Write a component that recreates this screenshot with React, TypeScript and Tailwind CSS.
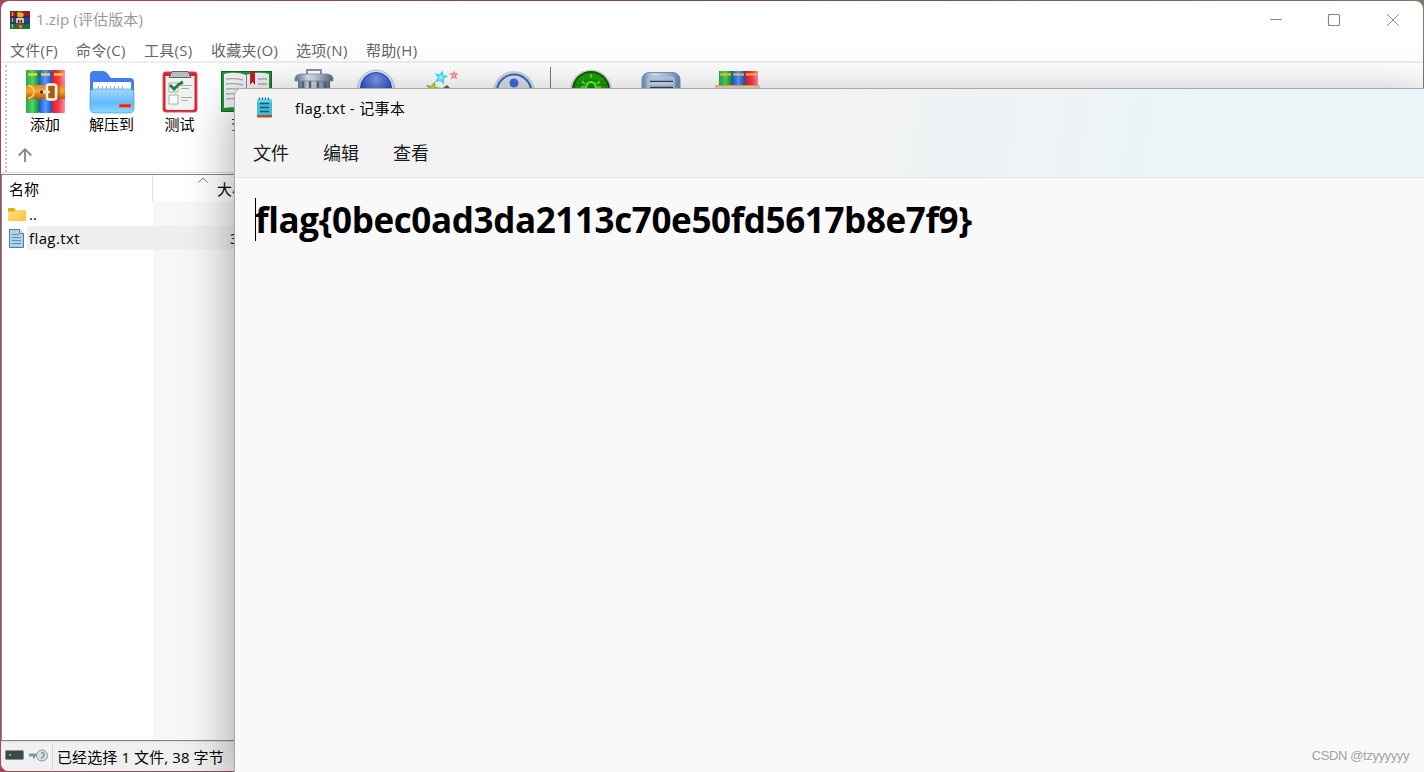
import type { ReactNode } from "react";

const menus = [
    { label: "文件(F)", width: "w-[66px]" },
    { label: "命令(C)", width: "w-[68px]" },
    { label: "工具(S)", width: "w-[67px]" },
    { label: "收藏夹(O)", width: "w-[85px]" },
    { label: "选项(N)", width: "w-[70px]" },
    { label: "帮助(H)", width: "w-[70px]" },
];

const Gradients = () => (
    <svg className="absolute" width="0" height="0">
        <defs>
            <linearGradient id="green"><stop offset="0" stopColor="#27a844" /><stop offset=".5" stopColor="#4fd468" /><stop offset="1" stopColor="#138a2c" /></linearGradient>
            <linearGradient id="blue"><stop offset="0" stopColor="#1a55d8" /><stop offset=".5" stopColor="#5a9bff" /><stop offset="1" stopColor="#1b4fc4" /></linearGradient>
            <linearGradient id="red"><stop offset="0" stopColor="#dc1d2d" /><stop offset=".5" stopColor="#f03a4a" /><stop offset="1" stopColor="#ff8fa5" /></linearGradient>
            <linearGradient id="belt" x2="0" y2="1"><stop offset="0" stopColor="#e08a1c" /><stop offset=".4" stopColor="#f5a938" /><stop offset="1" stopColor="#b85a08" /></linearGradient>
            <linearGradient id="folder" x2="0" y2="1"><stop offset="0" stopColor="#a3d6fa" /><stop offset=".6" stopColor="#62bbfb" /><stop offset="1" stopColor="#8ed8fd" /></linearGradient>
            <linearGradient id="steel"><stop offset="0" stopColor="#5f7690" /><stop offset=".35" stopColor="#dfe8f0" /><stop offset=".6" stopColor="#b4c3d2" /><stop offset="1" stopColor="#51677f" /></linearGradient>
            <linearGradient id="disk"><stop offset="0" stopColor="#6d8cba" /><stop offset=".3" stopColor="#d5e2f3" /><stop offset=".65" stopColor="#a8c0df" /><stop offset="1" stopColor="#6585b5" /></linearGradient>
            <linearGradient id="yellow" x2="1" y2="1"><stop offset="0" stopColor="#ffe596" /><stop offset="1" stopColor="#fbc434" /></linearGradient>
            <radialGradient id="ball" cx=".5" cy=".25" r=".6"><stop offset="0" stopColor="#7d9df0" /><stop offset="1" stopColor="#1e44b4" /></radialGradient>
        </defs>
    </svg>
);

const AddIcon = () => (
    <svg width="48" height="46">
        <rect x="5" y="1" width="13" height="43" rx="1" fill="url(#green)" />
        <rect x="18" y="1" width="13" height="43" rx="1" fill="url(#blue)" />
        <rect x="31" y="1" width="13" height="43" rx="1" fill="url(#red)" />
        <path d="M7 5.500h9M20 5.500h9M33 5.500h9" stroke="#ffd22b" strokeWidth="2.500" />
        <path d="M6 16h38v14H6q-1 0-1-7t1-7z" fill="url(#belt)" />
        <path d="M38 16v14" stroke="#97500d" />
        <path d="M7 16.500q6 1 6 6.500t-6 6.500" fill="none" stroke="#ffd768" strokeWidth="1.500" />
        <rect x="26" y="15.500" width="9" height="15" rx="2" fill="#a65e16" stroke="#fff3df" strokeWidth="2.500" />
        <path d="M22 23h7" stroke="#e8e0d5" strokeWidth="2.500" />
        <circle cx="20.500" cy="23" r="1.500" fill="#442000" />
    </svg>
);

const ExtractIcon = () => (
    <svg width="48" height="46">
        <path d="M2 6q0-4 4-4h9q3 0 5 3l3 4h19q4 0 4 4v26H2z" fill="#4080ee" />
        <path d="M5 13h38v14H5z" fill="#fff" />
        <path d="M10 18.500h28" stroke="#8faed0" strokeWidth="3" strokeDasharray="1 3" />
        <path d="M2 24q0-4 4-4h36q4 0 4 4v15q0 5-5 5H7q-5 0-5-5z" fill="url(#folder)" stroke="#439ee4" strokeWidth=".7" />
        <rect x="31" y="35" width="12" height="3.500" fill="#e2281a" stroke="#f98977" strokeWidth=".6" />
    </svg>
);

const TestIcon = () => (
    <svg width="48" height="46">
        <rect x="7" y="3" width="34" height="40" rx="2.500" fill="#d52334" stroke="#e2525b" />
        <path d="M9.500 7h29v32q0 2-2 2h-25q-2 0-2-2z" fill="#f1f2f2" />
        <path d="M16 2.500h16l3 6H13z" fill="#b8bebf" stroke="#6a6265" />
        <path d="M13 14h9v9h-9zM13 26h9v9h-9z" fill="#fff" stroke="#aaa" />
        <path d="M25 16.500h11M25 19.500h8M25 28.500h11M25 31.500h7" stroke="#b2a9a9" />
        <path d="M14 16l4 4q4-5 9-7" fill="none" stroke="#1b8240" strokeWidth="3" />
    </svg>
);

const ViewIcon = () => (
    <svg width="52" height="46">
        <rect x=".5" y="2.500" width="50" height="40" fill="#22933b" stroke="#0b6d25" />
        <path d="M3 5q12-3 22 1 12-4 23-1v34q-12-2-22 2-11-4-23-2z" fill="#f1f2f3" />
        <path d="M25.500 6v35" stroke="#888" />
        <path d="M5 10q9-1 17 1M5 15q9-1 17 1M5 20q9-1 17 1M5 25q9-1 17 1M5 30q9-1 17 1M37 10h9M37 15h9M29 20h17" fill="none" stroke="#a9adb0" strokeWidth="1.300" />
        <path d="M29 3h5v13l-2.500-3-2.500 3z" fill="#c91c27" />
    </svg>
);

const DeleteIcon = () => (
    <svg width="48" height="46">
        <path d="M17 5V1h14v4" fill="none" stroke="#8595a5" strokeWidth="2" />
        <path d="M8 10h32v34H8z" fill="url(#steel)" />
        <path d="M13 11v30M20 11v30M28 11v30M35 11v30" stroke="#5a6a7d" strokeWidth="2.500" />
        <path d="M5 9q1-4 7-4h24q6 0 7 4v3H5z" fill="url(#steel)" stroke="#7e8ea1" strokeWidth=".8" />
    </svg>
);

const FindIcon = () => (
    <svg width="48" height="46">
        <circle cx="24" cy="19.500" r="18.500" fill="#dfe5ec" stroke="#bcc5d0" />
        <circle cx="24" cy="19" r="15.500" fill="url(#ball)" stroke="#274ab4" />
    </svg>
);

const star = "M0-6 1.700-2 6-2 2.700 1 4 6 0 3.200-4 6-2.700 1-6-2-1.700-2z";

const WizardIcon = () => (
    <svg width="48" height="46">
        <path d={star} transform="translate(22 8) rotate(12) scale(.85)" fill="#a7f8ff" stroke="#2ae1f4" strokeWidth="1.500" />
        <path d={star} transform="translate(35 6) scale(.55)" fill="#ffc2c2" stroke="#fa8b8b" strokeWidth="2" />
        <path d={star} transform="translate(14 20) rotate(12)" fill="#c6f85a" stroke="#84d626" strokeWidth="1.500" />
        <path d="M24 19l4-3 4 4-3 3z" fill="#666" />
    </svg>
);

const InfoIcon = () => (
    <svg width="48" height="46">
        <circle cx="25" cy="23" r="21" fill="#ced5dd" />
        <circle cx="25" cy="22.500" r="17" fill="#d9dfe9" stroke="#3569cc" strokeWidth="2" />
        <circle cx="25" cy="14" r="4.500" fill="#3a70d9" />
        <path d="M19 20h9v15h-9z" fill="#3765b5" />
    </svg>
);

const VirusIcon = () => (
    <svg width="48" height="46">
        <circle cx="24" cy="21.500" r="21" fill="#d0d8d3" />
        <circle cx="24" cy="21" r="18" fill="#219c0c" stroke="#115b0a" strokeWidth="2" />
        <path d="M10 12h28M7 16h34M24 3v34" stroke="#0d7209" opacity=".7" />
        <ellipse cx="24" cy="19" rx="5" ry="6" fill="#168a08" stroke="#5eff24" strokeWidth="2" />
        <path d="M24 5v4M18 15l-3-3M30 15l3-3M18 18h-4M30 18h4" stroke="#62f52b" strokeWidth="1.500" />
    </svg>
);

const CommentIcon = () => (
    <svg width="48" height="46">
        <rect x="5" y="3.500" width="38" height="38" rx="7" fill="url(#disk)" stroke="#7595c4" />
        <rect x="10" y="7" width="28" height="25" rx="4" fill="#b8cde7" opacity=".8" />
        <path d="M13 12.500h23M13 18.500h23" stroke="#34465c" strokeWidth="1.500" />
        <path d="M13 14h23M13 20h23" stroke="#eef5fc" />
    </svg>
);

const SfxIcon = () => (
    <svg width="48" height="46">
        <rect x="5" y="2" width="13" height="15" fill="url(#green)" />
        <rect x="18" y="2" width="13" height="15" fill="url(#blue)" />
        <rect x="31" y="2" width="13" height="15" fill="url(#red)" />
        <path d="M6 5.500h11M19 5.500h11M32 5.500h11" stroke="#ffc82c" strokeWidth="2" />
        <path d="M2 16.500h43v25H2z" fill="#f5d7a6" stroke="#d8ac6e" />
    </svg>
);

const RarLogo = () => (
    <svg width="20" height="18">
        <path d="M0 0h20v6H0z" fill="#97172b" />
        <path d="M0 6h20v6H0z" fill="#283e9b" />
        <path d="M0 12h20v6H0z" fill="#147044" />
        <path d="M0 6h20M0 12h20" stroke="#222" strokeWidth=".8" />
        <path d="M2.500 1v4M2.500 7v4M2.500 13v4" stroke="#e5ad2c" strokeWidth="1.300" />
        <path d="M7 0h6v18H7z" fill="#824820" />
        <path d="M7 2l3-1 4 2-1 3H8z" fill="#e9b51e" />
        <path d="M7 12V8h6v4" fill="#4d2b1a" stroke="#f3eee6" strokeWidth="1.500" />
        <path d="M10 7v5" stroke="#eee" />
        <path d="M9 14h3v3H9z" fill="#bc922b" />
    </svg>
);

const NotepadLogo = () => (
    <svg width="17" height="21">
        <path d="M1 18h15v1.500q0 1-1 1H2q-1 0-1-1z" fill="#b45318" />
        <path d="M1 2h15v16H1z" fill="#45bad8" />
        <path d="M1 2h15v3H1z" fill="#6bd3e9" />
        <path d="M3.500.500v2M6.500.500v2M9.500.500v2M12.500.500v2" stroke="#155f78" strokeWidth="1.300" />
        <path d="M4 6.500h9M4 10.500h9M4 14.500h9" stroke="#086176" strokeWidth="1.300" />
    </svg>
);

const tools: { icon: ReactNode; label?: string; width: string }[] = [
    { icon: <AddIcon />, label: "添加", width: "w-[66px]" },
    { icon: <ExtractIcon />, label: "解压到", width: "w-[67px]" },
    { icon: <TestIcon />, label: "测试", width: "w-[69px]" },
    { icon: <ViewIcon />, label: "查看", width: "w-[65px]" },
    { icon: <DeleteIcon />, width: "w-[69px]" },
    { icon: <FindIcon />, width: "w-[56px]" },
    { icon: <WizardIcon />, width: "w-[78px]" },
    { icon: <InfoIcon />, width: "w-[62px]" },
];

const extraTools: { icon: ReactNode; label?: string; width: string }[] = [
    { icon: <VirusIcon />, width: "w-[68px]" },
    { icon: <CommentIcon />, width: "w-[71px]" },
    { icon: <SfxIcon />, width: "w-[83px]" },
];

const ToolButton = ({ icon, label, width }: { icon: ReactNode; label?: string; width: string }) => (
    <div className={`flex shrink-0 flex-col items-center ${width}`}>
        {icon}
        <span className="-mt-px text-[15px] leading-[20px] text-black">{label}</span>
    </div>
);

const WinRar = () => (
    <div className="absolute left-px top-px flex h-[770px] w-[1422px] flex-col overflow-hidden rounded-lg bg-white">
        <div className="flex h-[37px] shrink-0 items-center pl-[9px] text-[15px] text-[#999]">
            <RarLogo />
            <span className="ml-[6px] tracking-[0.15px]">1.zip (评估版本)</span>
            <div className="ml-auto flex items-center">
                <svg width="152" height="14" className="mb-[2px] mr-[1px]" fill="none" stroke="#8a8a8a">
                    <path d="M0 7.500h12" />
                    <rect x="58.500" y="2.500" width="11" height="11" rx="1" strokeWidth="1.200" />
                    <path d="M117 2l12 12M129 2l-12 12" />
                </svg>
            </div>
        </div>
        <div className="flex h-[23px] shrink-0 items-center pl-[9px] text-[15px] leading-[22px] text-[#666]">
            {menus.map((menu) => (
                <span key={menu.label} className={`shrink-0 whitespace-nowrap tracking-[0.3px] ${menu.width}`}>{menu.label}</span>
            ))}
        </div>
        <div className="h-[2px] shrink-0 bg-[#eee]" />
        <div className="flex h-[109px] shrink-0 pl-[4px]">
            <div className="mt-[2px] h-[107px] border-l-2 border-dotted border-[#c4c4c4]" />
            <div className="flex flex-col pl-[5px]">
                <div className="flex h-[75px] pt-[6px]">
                    {tools.map((tool, i) => <ToolButton key={i} {...tool} />)}
                    <div className="mx-[6px] -mt-[2px] w-px bg-[#777]" />
                    {extraTools.map((tool, i) => <ToolButton key={i} {...tool} />)}
                </div>
                <svg width="14" height="14" className="ml-[6px] mt-[10px]" fill="none" stroke="#868686" strokeWidth="1.800">
                    <path d="M7 14V1M.7 7.500L7 1.200l6.300 6.300" />
                </svg>
            </div>
        </div>
        <div className="mb-px h-px shrink-0 bg-[#ddd]" />
        <div className="flex h-[567px] shrink-0 flex-col border-y border-l border-[#828790] text-[15px] text-black">
            <div className="flex h-[27px] shrink-0 items-center">
                <span className="h-full w-[151px] border-r border-[#e2e2e2] pl-[7px] leading-[28px]">名称</span>
                <svg width="10" height="6" className="mb-[18px] ml-[45px]" fill="none" stroke="#777"><path d="M.5 5.500L5 1l4.500 4.500" /></svg>
                <span className="ml-[9px] leading-[28px]">大小</span>
            </div>
            <div className="flex grow flex-col bg-linear-to-r from-white from-[151px] to-[#f7f7f7] to-[151px]">
                <div className="flex h-[24px] items-center pl-[6px]">
                    <svg width="18" height="15">
                        <path d="M0 2q0-1 1-1h5l2 2h9q1 0 1 1v10H0z" fill="url(#yellow)" />
                        <path d="M0 2q0-1 1-1h5l2 2-2 1.500H0z" fill="#e9ad12" />
                    </svg>
                    <span className="ml-[3px]">..</span>
                </div>
                <div className="flex h-[24px] items-center pl-[7px]">
                    <svg width="15" height="19">
                        <path d="M.5.500h10l4 4v14H.5z" fill="#acd2ed" stroke="#527e9c" />
                        <path d="M10.500.500v4h4" fill="#e6f3fb" stroke="#527e9c" />
                        <path d="M3 5.500h7M3 8.500h9M3 11.500h9M3 14.500h9" stroke="#5b91b7" />
                    </svg>
                    <div className="ml-[3px] flex h-full grow items-center bg-[#efefef] pl-[2px]">
                        <span className="w-[201px] tracking-[0.4px]">flag.txt</span>
                        <span>38</span>
                    </div>
                </div>
            </div>
        </div>
        <div className="flex grow items-center border-t border-[#ddd] bg-[#f0f0f0] pl-[4px] text-[15px] text-black">
            <svg width="44" height="14" className="mb-[2px]">
                <rect x=".5" y="1.500" width="18" height="9" rx="1" fill="#3b494c" stroke="#82939c" />
                <circle cx="5" cy="6" r="1" fill="#7df046" />
                <path d="M24 4.500h10v3H30v2h-2v-2h-4z" fill="#8a9496" />
                <circle cx="37" cy="6.500" r="5.500" fill="#d7e0e2" stroke="#8f999c" />
                <path d="M36 4q4-1 3 2t-3 3" fill="none" stroke="#87969b" strokeWidth="1.500" />
            </svg>
            <span className="ml-[3px] h-[26px] border-l border-[#d5d5d5] pl-[4px] leading-[27px] tracking-[0.1px]">已经选择 1 文件, 38 字节</span>
        </div>
    </div>
);

const Notepad = () => (
    <div className="absolute left-[234px] top-[88px] flex h-[690px] w-[1200px] flex-col overflow-hidden rounded-tl-lg border border-[#a9a9ab] bg-[#f9f9f9] shadow-[0_12px_50px_rgba(0,0,0,0.37)]">
        <div className="flex h-[89px] shrink-0 flex-col border-b border-[#e3e5e7] bg-linear-[100deg,#f3f3f3_30%,#eff2f4_60%,#ebf4f7_82%]">
            <div className="flex h-[39px] items-center pl-[21px] text-[15px] text-black">
                <NotepadLogo />
                <span className="ml-[22px] tracking-[0.35px]">flag.txt - 记事本</span>
            </div>
            <div className="flex h-[52px] items-center gap-[34px] pl-[18px] pt-[4px] text-[18px] text-[#1a1a1a]">
                <span>文件</span>
                <span>编辑</span>
                <span>查看</span>
            </div>
        </div>
        <div className="flex items-center pl-[20px] pt-[20px]">
            <div className="h-[43px] w-px bg-black" />
            <span className="-ml-px whitespace-nowrap text-[35px] font-bold leading-[43px] tracking-[-0.38px] text-black">flag&#123;0bec0ad3da2113c70e50fd5617b8e7f9&#125;</span>
        </div>
        <span className="mb-[13px] mr-[24px] mt-auto self-end font-['Liberation_Sans'] text-[13px] leading-[16px] tracking-[-0.4px] text-[#a3a3a3]">CSDN @tzyyyyyy</span>
    </div>
);

const App = () => {
    return (
        <div className="relative h-[772px] w-[1424px] overflow-hidden bg-linear-to-r from-[#a34a5b] via-[#70406e] to-[#877766] font-['Open_Sans','Noto_Sans_CJK_SC',sans-serif]">
            <Gradients />
            <WinRar />
            <Notepad />
        </div>
    );
};

export default App;
